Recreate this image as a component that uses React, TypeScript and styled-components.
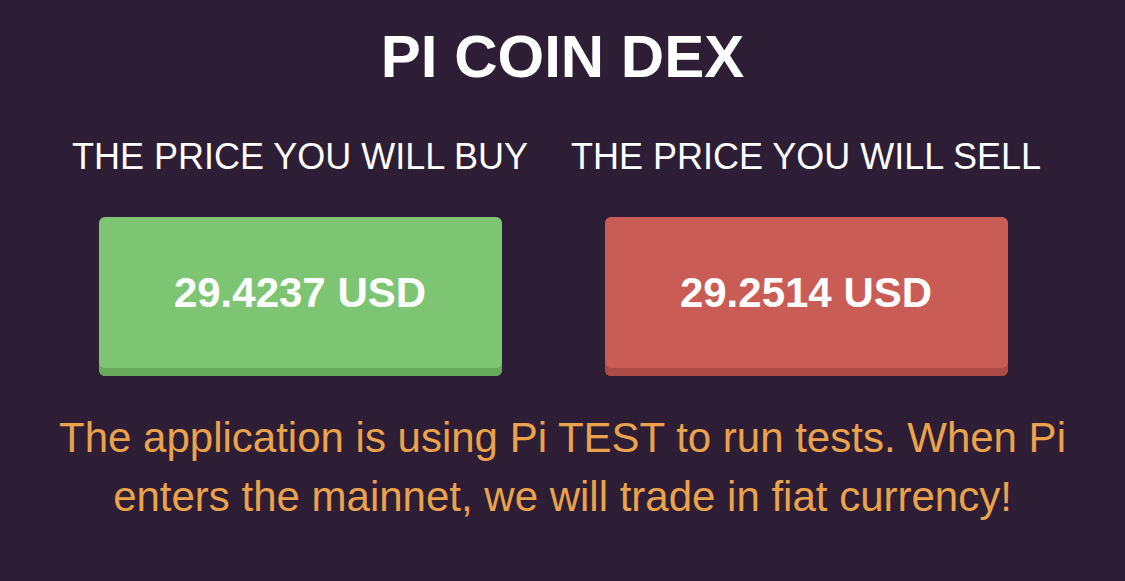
import React from "react";
import styled, { createGlobalStyle } from "styled-components";

const GlobalStyle = createGlobalStyle`
  html, body {
    margin: 0;
    padding: 0;
    background: #2e1e35;
  }
  body {
    font-family: "Liberation Sans", Arial, sans-serif;
    color: #fff;
  }
`;

const Page = styled.div`
  width: 1125px;
  height: 581px;
  background: #2e1e35;
  display: flex;
  flex-direction: column;
  align-items: center;
  box-sizing: border-box;
  padding-top: 27px;
  overflow: hidden;
`;

const Title = styled.h1`
  margin: 0;
  font-size: 60px;
  line-height: 60px;
  font-weight: 700;
  color: #fff;
`;

const Columns = styled.div`
  align-self: flex-start;
  display: grid;
  grid-template-columns: 506px 506px;
  padding-left: 47px;
  margin-top: 52px;
`;

const Column = styled.div`
  display: flex;
  flex-direction: column;
  align-items: center;
  gap: 42px;
`;

const Label = styled.div`
  font-size: 36px;
  line-height: 36px;
  white-space: nowrap;
  color: #fff;
`;

const PriceButton = styled.button<{ $face: string; $edge: string }>`
  width: 403px;
  height: 159px;
  border: none;
  border-radius: 6px;
  background: ${(p) => p.$face};
  box-shadow: inset 0 -8px 0 ${(p) => p.$edge};
  padding: 0 0 8px;
  font-family: "Liberation Sans", Arial, sans-serif;
  font-size: 42px;
  font-weight: 700;
  color: #fff;
  cursor: pointer;
`;

const Notice = styled.p`
  margin: 32px 0 0;
  padding: 0 40px;
  font-size: 42px;
  line-height: 59px;
  text-align: center;
  color: #eaa24c;
`;

const prices = [
  { label: "THE PRICE YOU WILL BUY", value: "29.4237 USD", face: "#7dc572", edge: "#67aa5b" },
  { label: "THE PRICE YOU WILL SELL", value: "29.2514 USD", face: "#c95d55", edge: "#ac4b46" },
];

export default function App() {
  return (
    <>
      <GlobalStyle />
      <Page>
        <Title>PI COIN DEX</Title>
        <Columns>
          {prices.map((p) => (
            <Column key={p.label}>
              <Label>{p.label}</Label>
              <PriceButton $face={p.face} $edge={p.edge}>
                {p.value}
              </PriceButton>
            </Column>
          ))}
        </Columns>
        <Notice>
          The application is using Pi TEST to run tests. When Pi enters the mainnet, we will trade in fiat currency!
        </Notice>
      </Page>
    </>
  );
}
